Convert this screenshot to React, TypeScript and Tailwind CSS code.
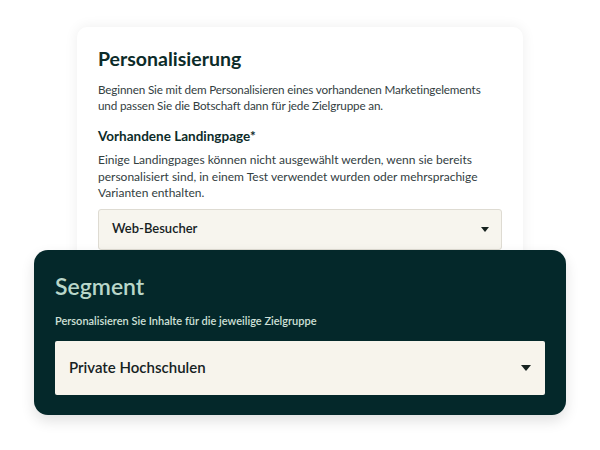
function Caret({ className }: { className?: string }) {
  return (
    <svg viewBox="0 0 10 6" className={className} fill="currentColor">
      <path d="M0 0h10L5 6z" />
    </svg>
  );
}

export default function App() {
  return (
    <div
      className="h-[450px] w-[600px] overflow-hidden bg-white"
      style={{ fontFamily: "Lato, 'Noto Sans', sans-serif" }}
    >
      <div className="flex flex-col pt-[27px]">
        {/* light card */}
        <div className="mx-[77px] rounded-[10px] bg-white px-[21px] pt-[20px] pb-[30px] shadow-[0_0_14px_rgba(0,0,0,0.07)]">
          <h1 className="text-[19.5px] leading-[24px] font-bold text-[#0c2b29]">
            Personalisierung
          </h1>
          <p className="mt-[10px] text-[11.7px] leading-[16px] tracking-[-0.15px] whitespace-nowrap text-[#33403f]">
            Beginnen Sie mit dem Personalisieren eines vorhandenen Marketingelements
            <br />
            und passen Sie die Botschaft dann für jede Zielgruppe an.
          </p>
          <h2 className="mt-[14px] text-[13.5px] leading-[18px] font-bold text-[#0c2b29]">
            Vorhandene Landingpage*
          </h2>
          <p className="mt-[7px] text-[12px] leading-[16.5px] text-[#33403f]">
            Einige Landingpages können nicht ausgewählt werden, wenn sie bereits personalisiert sind, in einem Test verwendet wurden oder mehrsprachige Varianten enthalten.
          </p>
          <div className="mt-[7px] flex h-[41px] items-center justify-between rounded-[3px] border border-[#dedbd2] bg-[#f7f5ee] pr-[12px] pl-[13px]">
            <span className="text-[13px] font-semibold text-[#16221f]">Web-Besucher</span>
            <Caret className="h-[5px] w-[8px] text-[#16221f]" />
          </div>
        </div>

        {/* dark segment panel */}
        <div className="relative mx-[34px] -mt-[30px] rounded-[14px] bg-[#04282a] px-[21px] pt-[22px] pb-[20px] shadow-[0_6px_14px_rgba(0,0,0,0.12)]">
          <h2 className="text-[23px] leading-[28px] font-semibold text-[#b9d6c9]">Segment</h2>
          <p className="mt-[14px] text-[11px] leading-[14px] font-semibold text-[#cfe0d8]">
            Personalisieren Sie Inhalte für die jeweilige Zielgruppe
          </p>
          <div className="mt-[13px] flex h-[54px] items-center justify-between rounded-[2px] bg-[#f7f4ec] pr-[14px] pl-[14px]">
            <span className="text-[15px] font-semibold text-[#16221f]">Private Hochschulen</span>
            <Caret className="h-[6px] w-[10px] text-[#16221f]" />
          </div>
        </div>
      </div>
    </div>
  );
}
